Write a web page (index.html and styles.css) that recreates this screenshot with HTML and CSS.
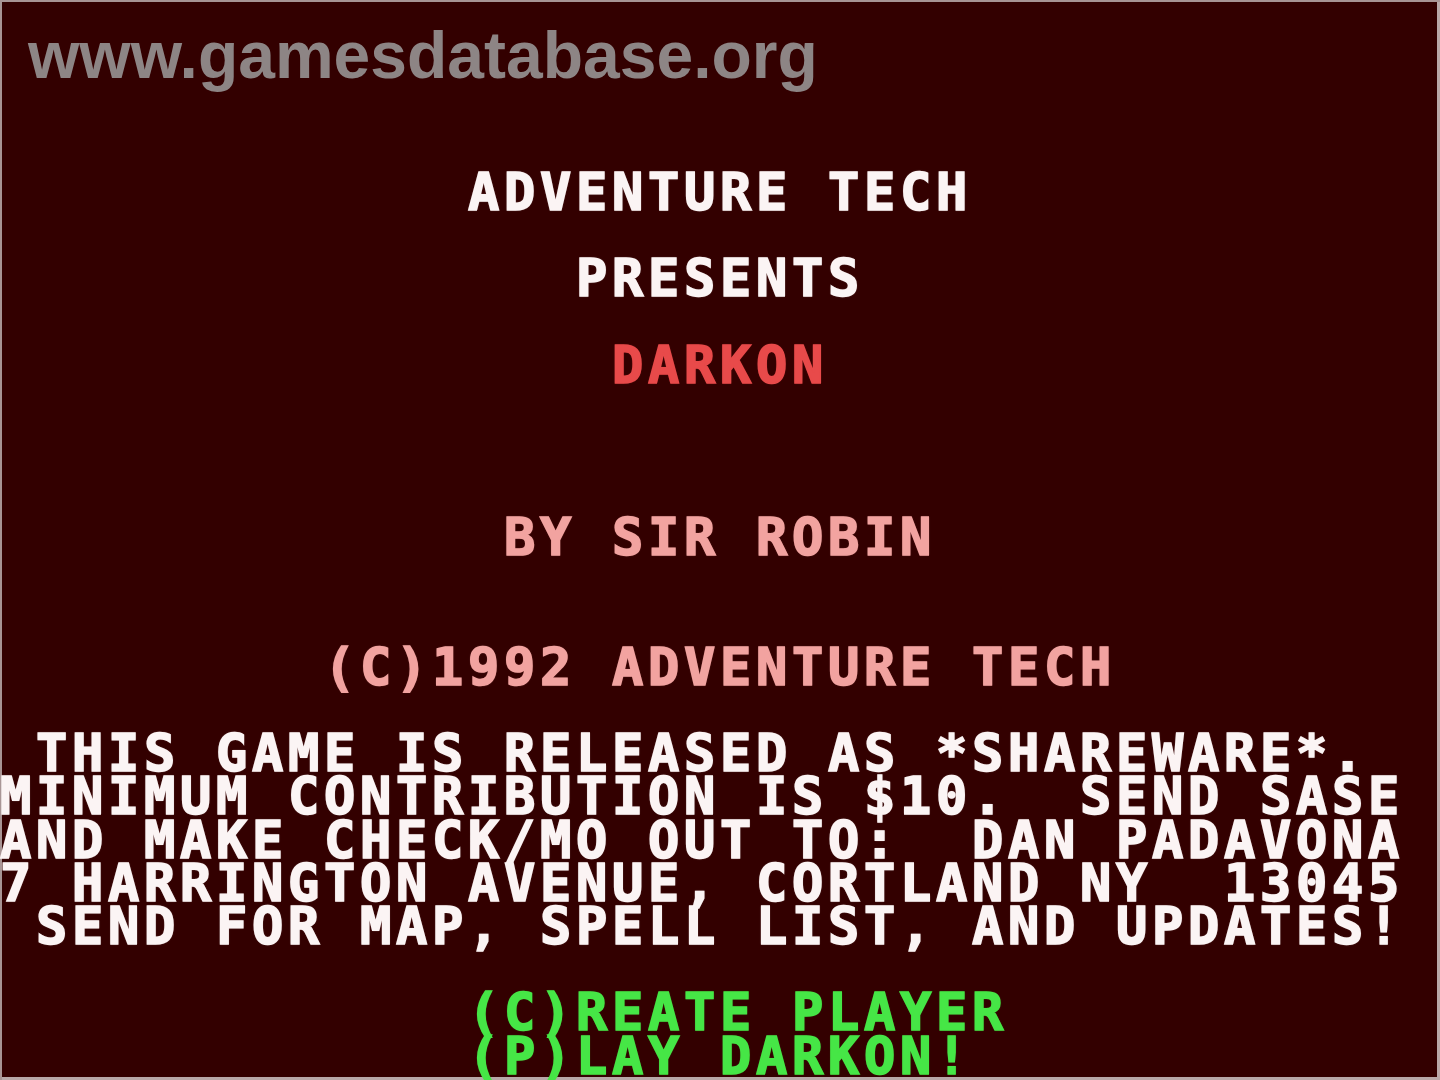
FILE: index.html
```html
<!DOCTYPE html>
<html lang="en">
<head>
<meta charset="utf-8">
<title>Darkon - Title Screen</title>
<link rel="stylesheet" href="styles.css">
</head>
<body>
<div class="screen">
  <div class="rows">
    <div class="row"> </div>
    <div class="row"> </div>
    <div class="row"> </div>
    <div class="row"> </div>
    <div class="row white">             ADVENTURE TECH</div>
    <div class="row"> </div>
    <div class="row white">                PRESENTS</div>
    <div class="row"> </div>
    <div class="row red">                 DARKON</div>
    <div class="row"> </div>
    <div class="row"> </div>
    <div class="row"> </div>
    <div class="row pink">              BY SIR ROBIN</div>
    <div class="row"> </div>
    <div class="row"> </div>
    <div class="row pink">         (C)1992 ADVENTURE TECH</div>
    <div class="row"> </div>
    <div class="row white"> THIS GAME IS RELEASED AS *SHAREWARE*.</div>
    <div class="row white">MINIMUM CONTRIBUTION IS $10.  SEND SASE</div>
    <div class="row white">AND MAKE CHECK/MO OUT TO:  DAN PADAVONA</div>
    <div class="row white">7 HARRINGTON AVENUE, CORTLAND NY  13045</div>
    <div class="row white"> SEND FOR MAP, SPELL LIST, AND UPDATES!</div>
    <div class="row"> </div>
    <div class="row green">             (C)REATE PLAYER</div>
    <div class="row green">             (P)LAY DARKON!</div>
  </div>
  <div class="watermark">www.gamesdatabase.org</div>
</div>
</body>
</html>
```

FILE: styles.css
```css
html, body {
  margin: 0;
  padding: 0;
  background: #330000;
}

.screen {
  position: relative;
  width: 1440px;
  height: 1080px;
  background: #330000;
  overflow: hidden;
  display: flex;
  flex-direction: column;
  box-shadow: inset 2px 2px 0 #a89494, inset -3px -3px 0 #b8a8a8;
}

.rows {
  margin-top: -2px;
  display: flex;
  flex-direction: column;
}

.row {
  height: 43.2px;
  line-height: 43.2px;
  white-space: pre;
  font-family: "DejaVu Sans Mono", "Liberation Mono", monospace;
  font-weight: bold;
  font-size: 52px;
  letter-spacing: 4.693px;
  -webkit-text-stroke: 1.6px currentColor;
  text-shadow: 0 0 1.5px currentColor;
}

.white { color: #fbf4f4; }
.red   { color: #e84a4a; }
.pink  { color: #f2a3a0; }
.green { color: #46e646; }

.watermark {
  position: absolute;
  left: 28px;
  top: 22px;
  font-family: "Liberation Sans", Arial, sans-serif;
  font-weight: bold;
  font-size: 66px;
  line-height: 1;
  color: #8d8585;
}
```
